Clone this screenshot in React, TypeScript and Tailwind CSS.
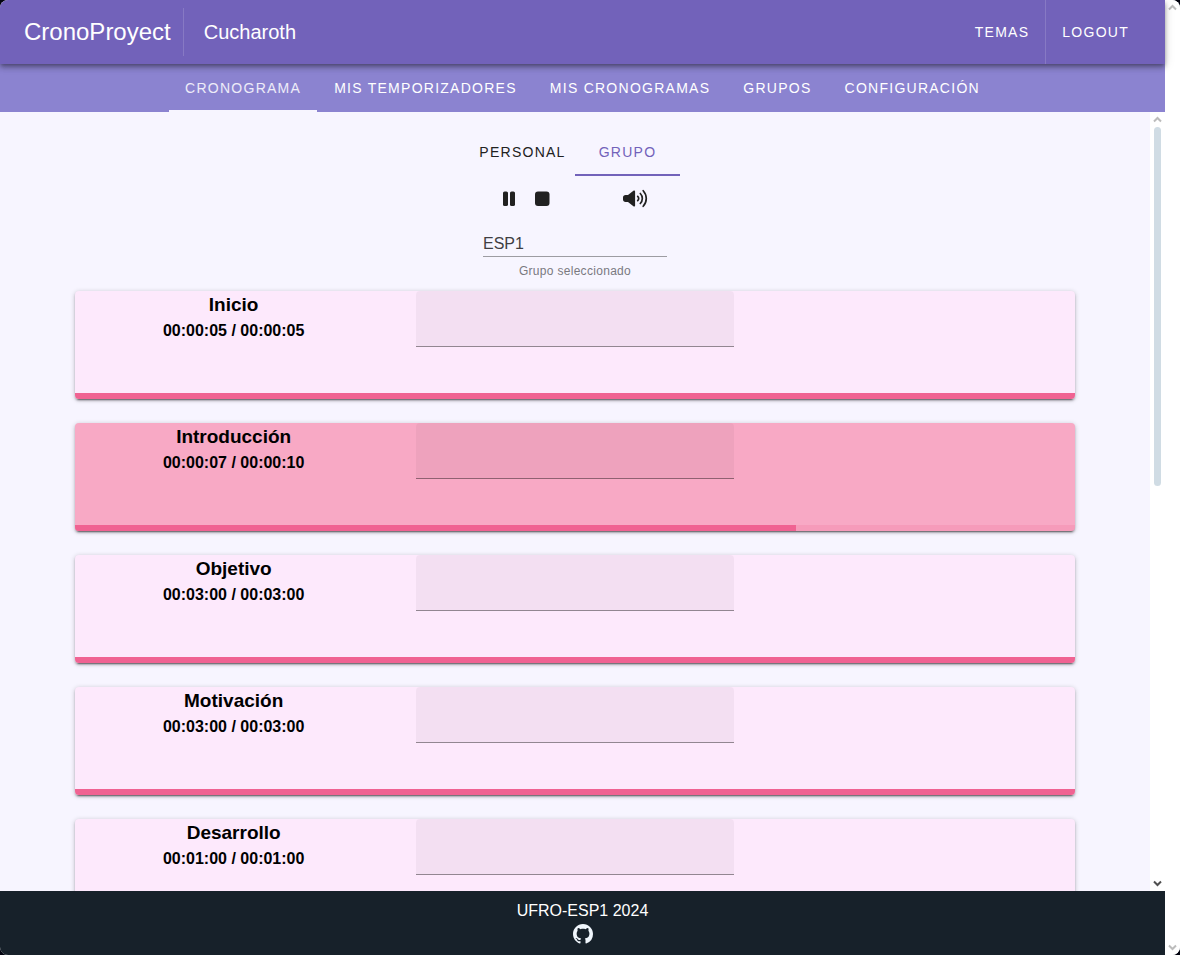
import React from "react";

const NAV = ["Cronograma", "Mis temporizadores", "Mis cronogramas", "Grupos", "Configuración"];

type Stage = { name: string; elapsed: string; total: string; progress: number; active?: boolean };

const STAGES: Stage[] = [
  { name: "Inicio", elapsed: "00:00:05", total: "00:00:05", progress: 100 },
  { name: "Introducción", elapsed: "00:00:07", total: "00:00:10", progress: 72.1, active: true },
  { name: "Objetivo", elapsed: "00:03:00", total: "00:03:00", progress: 100 },
  { name: "Motivación", elapsed: "00:03:00", total: "00:03:00", progress: 100 },
  { name: "Desarrollo", elapsed: "00:01:00", total: "00:01:00", progress: 100 },
];

const PauseIcon = () => (
  <svg aria-hidden="true" width="14" height="16" viewBox="0 0 14 16" fill="currentColor">
    <rect x="1" y="0.5" width="5" height="14.5" rx="1.6" />
    <rect x="8" y="0.5" width="5" height="14.5" rx="1.6" />
  </svg>
);

const StopIcon = () => (
  <svg aria-hidden="true" width="16" height="16" viewBox="0 0 16 16" fill="currentColor">
    <rect x="1" y="0.5" width="14.500" height="14.500" rx="3" />
  </svg>
);

const VolumeIcon = () => (
  <svg aria-hidden="true" width="26" height="20" viewBox="0 0 26 20" fill="none" stroke="currentColor" strokeWidth="1.7" strokeLinecap="round">
    <path
      fill="currentColor"
      stroke="none"
      d="M3.600 5.900h2.400l5.400-4.200c.8-.6 1.700-.2 1.700.8v14c0 1-.9 1.400-1.700.8L6 13.100H3.600C2 13.100 1 12 1 10.600V8.400C1 7 2 5.900 3.600 5.900z"
    />
    <path d="M15.700 7.300c1.300 1.200 1.300 3.200 0 4.400M18.300 4.500c2.700 2.800 2.700 7.200 0 10M21.200 1.700c4.100 4.600 4.100 11 0 15.600" />
  </svg>
);

const GithubIcon = () => (
  <svg aria-hidden="true" width="20" height="20" viewBox="0 0 16 16" fill="currentColor">
    <path d="M8 0C3.580 0 0 3.580 0 8c0 3.540 2.290 6.530 5.470 7.590.4.070.55-.17.55-.38 0-.19-.01-.82-.01-1.490-2.010.37-2.530-.49-2.690-.94-.09-.23-.48-.94-.82-1.130-.28-.15-.68-.52-.01-.53.63-.01 1.080.58 1.230.82.72 1.210 1.870.87 2.330.66.07-.52.28-.87.51-1.070-1.780-.2-3.640-.89-3.640-3.950 0-.87.31-1.590.82-2.150-.08-.2-.36-1.020.08-2.120 0 0 .67-.21 2.200.82.64-.18 1.320-.27 2-.27s1.360.09 2 .27c1.530-1.040 2.200-.82 2.200-.82.44 1.100.16 1.920.08 2.120.51.56.82 1.270.82 2.150 0 3.070-1.870 3.750-3.650 3.950.29.25.54.73.54 1.480 0 1.070-.01 1.930-.01 2.200 0 .21.15.46.55.38A8.010 8.010 0 0 0 16 8c0-4.420-3.580-8-8-8z" />
  </svg>
);

const Chevron = ({ down, dark }: { down?: boolean; dark?: boolean }) => (
  <svg
    aria-hidden="true"
    width="9"
    height="7"
    viewBox="0 0 9 7"
    fill="none"
    strokeWidth="2"
    className={dark ? "stroke-[#505050]" : "stroke-[#bcbcbc]"}
  >
    <path d={down ? "M1 1.500l3.500 3.500L8 1.500" : "M1 5.500L4.500 2 8 5.500"} />
  </svg>
);

function StageCard({ stage }: { stage: Stage }) {
  return (
    <li
      className={`flex min-h-[108px] shrink-0 flex-col overflow-hidden rounded shadow-[0_3px_1px_-2px_rgba(0,0,0,0.35),0_2px_2px_0_rgba(0,0,0,0.2),0_1px_5px_0_rgba(0,0,0,0.22)] ${
        stage.active ? "bg-[#f8a9c5]" : "bg-[#fde9fc]"
      }`}
    >
      <div className="grid flex-1 grid-cols-3 gap-6">
        <div className="text-center font-bold text-black">
          <h2 className="text-[19px] leading-[27px]">{stage.name}</h2>
          <p className="text-base leading-[26px]">
            {stage.elapsed} / {stage.total}
          </p>
        </div>
        <input
          type="text"
          readOnly
          aria-label={`Notas de ${stage.name}`}
          className="h-14 w-full rounded-t border-b border-black/40 bg-black/4 px-4 outline-none"
        />
      </div>
      <div className="h-1.5 bg-[#f06292]/20">
        <div className="h-full bg-[#f06292]" style={{ width: `${stage.progress}%` }} />
      </div>
    </li>
  );
}

export default function App() {
  return (
    <div className="h-screen bg-[#02030f] font-['Liberation_Sans',Arial,sans-serif]">
      <div className="flex h-full overflow-hidden rounded-lg bg-white">
        <div className="flex min-w-0 flex-1 flex-col">
          <header className="relative flex h-16 shrink-0 items-center bg-[#7262ba] pl-6 text-white shadow-[0_2px_4px_-1px_rgba(0,0,0,0.3),0_4px_5px_0_rgba(0,0,0,0.2),0_1px_10px_0_rgba(0,0,0,0.15)]">
            <h1 className="pr-3 text-2xl">CronoProyect</h1>
            <div className="h-12 w-px bg-white/15" />
            <span className="pl-5 text-xl">Cucharoth</span>
            <div className="ml-auto flex h-full text-sm tracking-[0.09em]">
              <button className="px-4 uppercase">Temas</button>
              <button className="mr-5 border-l border-white/15 px-4 uppercase">Logout</button>
            </div>
          </header>

          <nav className="flex h-12 shrink-0 justify-center gap-px bg-[#8b83d0] text-sm tracking-[0.09em] text-white">
            {NAV.map((label, i) => (
              <a
                key={label}
                href="#"
                className={`flex items-center border-y-2 border-t-transparent px-4 uppercase ${
                  i === 0 ? "border-b-[#f7f5ff] text-white/85" : "border-b-transparent"
                }`}
              >
                {label}
              </a>
            ))}
          </nav>

          <div className="flex min-h-0 flex-1 bg-white">
            <main className="flex min-w-0 flex-1 flex-col items-center overflow-hidden bg-[#f7f5ff] pt-4">
              <div role="tablist" className="grid h-12 w-[210px] shrink-0 grid-cols-2 text-sm tracking-[0.09em] text-[#212121]">
                <button role="tab" aria-selected="false" className="border-y-2 border-transparent uppercase">
                  Personal
                </button>
                <button
                  role="tab"
                  aria-selected="true"
                  className="border-y-2 border-t-transparent border-b-[#7262ba] uppercase text-[#7262ba]"
                >
                  Grupo
                </button>
              </div>

              <div className="flex h-[46px] w-[146px] shrink-0 items-center text-[#212121]">
                <button aria-label="Pausar">
                  <PauseIcon />
                </button>
                <button aria-label="Detener" className="ml-[18px]">
                  <StopIcon />
                </button>
                <button aria-label="Volumen" className="ml-auto">
                  <VolumeIcon />
                </button>
              </div>

              <div className="flex w-[184px] shrink-0 flex-col pt-2">
                <input
                  id="grupo"
                  type="text"
                  readOnly
                  defaultValue="ESP1"
                  className="h-[27px] w-full border-b border-[#9d9ca2] bg-transparent pt-0.5 text-base text-[#3f3e43] outline-none"
                />
                <label htmlFor="grupo" className="pt-1.5 text-center text-xs tracking-wide text-[#7a797f]">
                  Grupo seleccionado
                </label>
              </div>

              <ul className="flex min-h-0 w-full max-w-[1000px] flex-1 flex-col gap-6 pt-3">
                {STAGES.map((stage) => (
                  <StageCard key={stage.name} stage={stage} />
                ))}
              </ul>
            </main>
            <div className="flex w-[15px] flex-col items-center justify-between py-1">
              <div className="flex min-h-0 flex-1 flex-col items-center gap-1">
                <Chevron />
                <div className="h-[47%] w-[7px] rounded-full bg-[#d0dce4]" />
              </div>
              <Chevron down dark />
            </div>
          </div>

          <footer className="flex h-16 shrink-0 flex-col items-center bg-[#17212a] pt-2 text-white">
            <p className="text-base leading-6">UFRO-ESP1 2024</p>
            <a href="#" aria-label="GitHub" className="pt-px text-[#f0f6fc]">
              <GithubIcon />
            </a>
          </footer>
        </div>
        <div className="flex w-[15px] flex-col items-center justify-between bg-white py-1">
          <Chevron />
          <Chevron down />
        </div>
      </div>
    </div>
  );
}
